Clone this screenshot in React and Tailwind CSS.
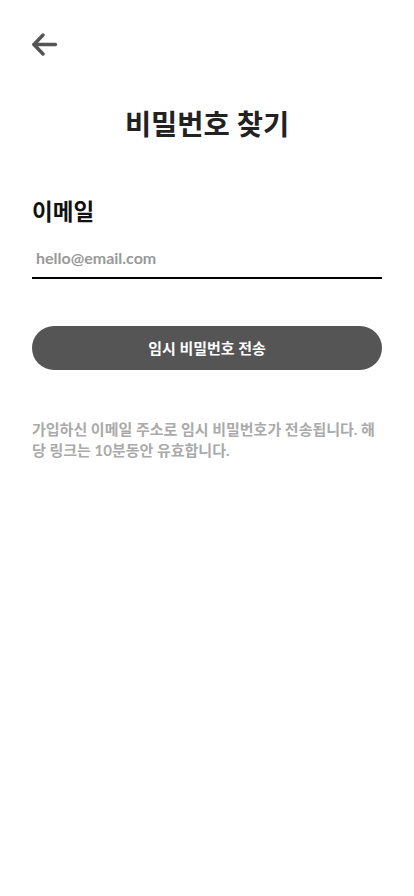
export default function App() {
  const font = { fontFamily: 'Lato, "Noto Sans CJK KR", sans-serif' };
  return (
    <div className="w-[414px] h-[896px] bg-white" style={font}>
      <div className="px-8 pt-[32px]">
        <button className="block w-[26px] h-[26px] text-[#555]">
          <svg width="26" height="26" viewBox="0 0 26 26" fill="none" stroke="#555" strokeWidth="3.4" strokeLinecap="round" strokeLinejoin="round">
            <path d="M23.5 12.5H2" />
            <path d="M11 3L2 12.5L11 22" />
          </svg>
        </button>
        <h1 className="mt-[48px] text-center text-[28.5px] leading-[36px] font-bold text-[#222]">비밀번호 찾기</h1>
        <div className="mt-[55px] text-[22.5px] leading-[30px] font-bold text-[#111]">이메일</div>
        <div className="mt-[19px] border-b-2 border-black pb-[7px]">
          <input
            className="w-full px-1 text-[16px] leading-[21px] font-bold text-[#333] placeholder:text-[#999] outline-none bg-transparent"
            placeholder="hello@email.com"
            style={font}
          />
        </div>
        <button className="mt-[47px] w-full h-[44px] rounded-full bg-[#555] text-white text-[15px] font-bold" style={font}>
          임시 비밀번호 전송
        </button>
        <p className="mt-[49px] text-[15px] leading-[21px] font-bold text-[#aaa]">
          가입하신 이메일 주소로 임시 비밀번호가 전송됩니다. 해당 링크는 10분동안 유효합니다.
        </p>
      </div>
    </div>
  );
}
